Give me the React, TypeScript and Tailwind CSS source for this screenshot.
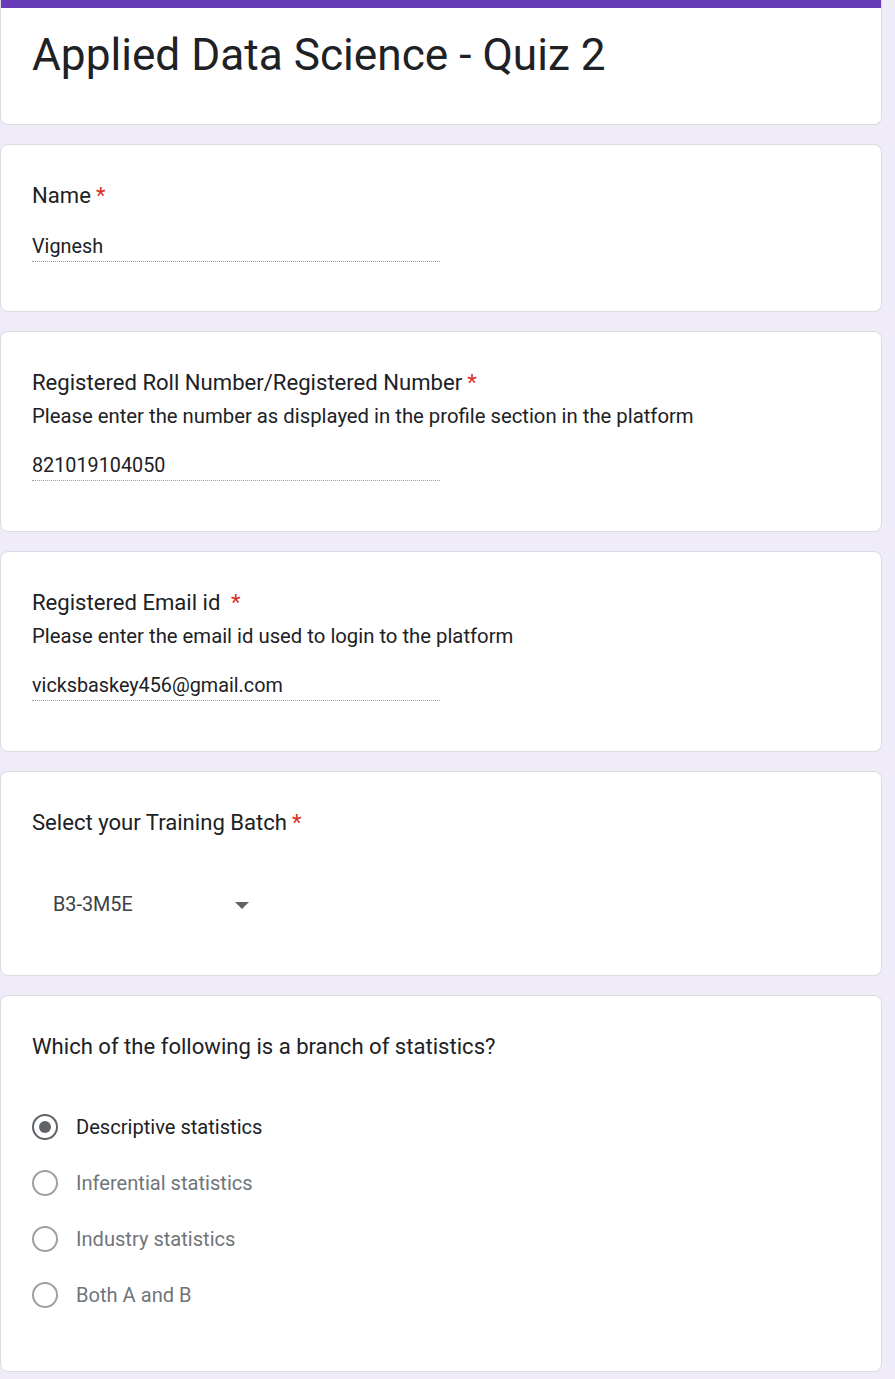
import React from "react";

const font = { fontFamily: "Roboto, 'Liberation Sans', sans-serif" };

function Req() {
  return <span className="text-[#d93025] ml-[5px]">*</span>;
}

function Label({ children }: { children: React.ReactNode }) {
  return <div className="h-[32px] text-[22.1px] leading-[32px] text-[#202124]">{children}</div>;
}

function Desc({ children }: { children: React.ReactNode }) {
  return <div className="mt-[4px] h-[28px] text-[20.3px] leading-[28px] text-[#202124]">{children}</div>;
}

function TextAnswer({ value }: { value: string }) {
  return (
    <div className="mt-[22px] w-[408px] h-[29px] leading-[28px] text-[19.8px] text-[#202124] border-b border-dotted border-[#9aa0a6]">
      {value}
    </div>
  );
}

function Radio({ label, checked }: { label: string; checked?: boolean }) {
  return (
    <div className="flex items-center h-[56px]">
      <div
        className={`w-[26px] h-[26px] rounded-full border-[2px] flex items-center justify-center ${
          checked ? "border-[#5f6368]" : "border-[#9aa0a6]"
        }`}
      >
        {checked && <div className="w-[12px] h-[12px] rounded-full bg-[#5f6368]" />}
      </div>
      <span
        className={`ml-[18px] text-[20.1px] ${checked ? "text-[#202124]" : "text-[#70757a]"}`}
      >
        {label}
      </span>
    </div>
  );
}

export default function App() {
  return (
    <div className="min-h-[1379px] bg-[#f0ebf8] pr-[13px]" style={font}>
      <div className="flex flex-col gap-[19px]">
        {/* Title card */}
        <div className="h-[125px] bg-white rounded-b-lg border border-t-0 border-[#dadce0] overflow-hidden">
          <div className="h-[8px] bg-[#673ab7]" />
          <div className="pl-[31px] pt-[21px]">
            <h1 className="text-[44.2px] leading-[53px] text-[#202124]">Applied Data Science - Quiz 2</h1>
          </div>
        </div>

        {/* Name */}
        <div className="h-[168px] bg-white rounded-lg border border-[#dadce0] pl-[31px] pt-[34px]">
          <Label>
            Name<Req />
          </Label>
          <TextAnswer value="Vignesh" />
        </div>

        {/* Roll number */}
        <div className="h-[201px] bg-white rounded-lg border border-[#dadce0] pl-[31px] pt-[34px]">
          <Label>
            Registered Roll Number/Registered Number<Req />
          </Label>
          <Desc>Please enter the number as displayed in the profile section in the platform</Desc>
          <TextAnswer value="821019104050" />
        </div>

        {/* Email */}
        <div className="h-[201px] bg-white rounded-lg border border-[#dadce0] pl-[31px] pt-[34px]">
          <Label>
            Registered Email id <Req />
          </Label>
          <Desc>Please enter the email id used to login to the platform</Desc>
          <TextAnswer value="vicksbaskey456@gmail.com" />
        </div>

        {/* Batch */}
        <div className="h-[205px] bg-white rounded-lg border border-[#dadce0] pl-[31px] pt-[34px]">
          <Label>
            Select your Training Batch<Req />
          </Label>
          <div className="mt-[43px] h-[48px] flex items-center pl-[21px]">
            <span className="text-[19.8px] text-[#3c4043] w-[182px]">B3-3M5E</span>
            <svg width="14" height="7" viewBox="0 0 14 7">
              <path d="M0 0 L14 0 L7 7 Z" fill="#5f6368" />
            </svg>
          </div>
        </div>

        {/* Question */}
        <div className="h-[377px] bg-white rounded-lg border border-[#dadce0] pl-[31px] pt-[34px]">
          <Label>Which of the following is a branch of statistics?</Label>
          <div className="mt-[37px] flex flex-col">
            <Radio label="Descriptive statistics" checked />
            <Radio label="Inferential statistics" />
            <Radio label="Industry statistics" />
            <Radio label="Both A and B" />
          </div>
        </div>
      </div>
    </div>
  );
}
